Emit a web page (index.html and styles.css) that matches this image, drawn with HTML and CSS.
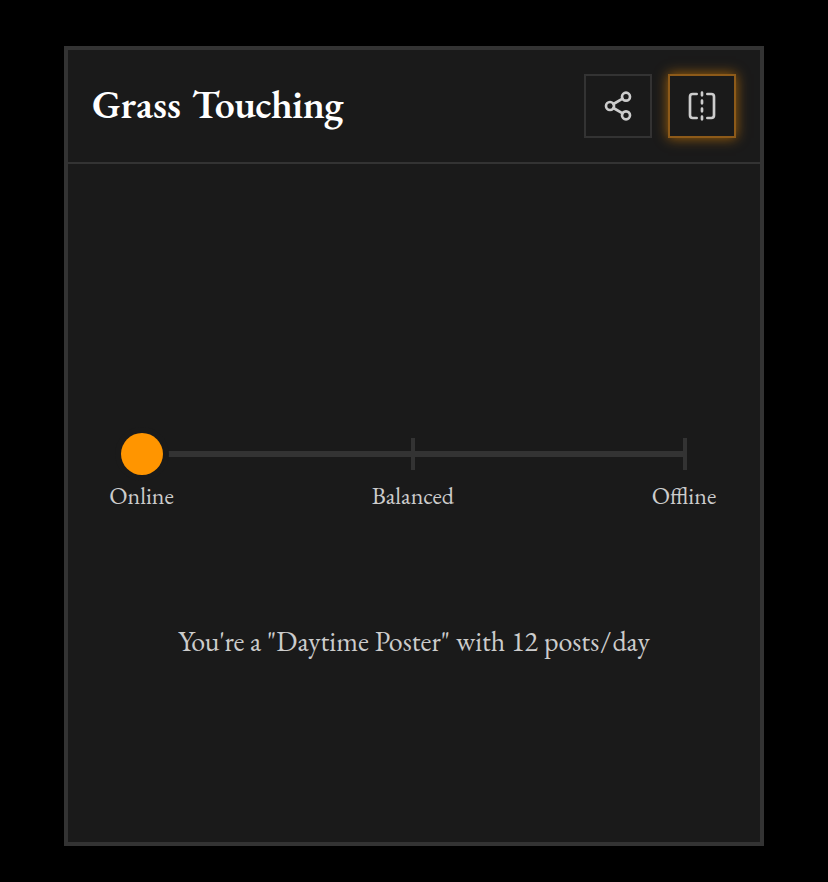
FILE: index.html
```
<!DOCTYPE html>
<html lang="en">
  <head>
    <meta charset="UTF-8" />
    <meta name="viewport" content="width=device-width, initial-scale=1.0" />
    <title>Grass Touching</title>
    <link rel="stylesheet" href="styles.css">
  </head>
  <body>
    <div class="card">
      <div class="card-header">
        <h1>Grass <span class="title-end">Touching</span></h1>
        <div class="actions">
          <button type="button" class="icon-button" aria-label="Share">
            <svg viewBox="0 0 24 24">
              <circle cx="18" cy="5" r="3" />
              <circle cx="6" cy="12" r="3" />
              <circle cx="18" cy="19" r="3" />
              <path d="M8.59 13.51l6.83 3.98M15.41 6.51l-6.82 3.98" />
            </svg>
          </button>
          <button type="button" class="icon-button active" aria-label="Flip">
            <svg viewBox="0 0 24 24">
              <path d="M8 3H5a2 2 0 0 0-2 2v14a2 2 0 0 0 2 2h3" />
              <path d="M16 3h3a2 2 0 0 1 2 2v14a2 2 0 0 1-2 2h-3" />
              <path d="M12 20v2M12 14v2M12 8v2M12 2v2" />
            </svg>
          </button>
        </div>
      </div>

      <div class="card-body">
        <div class="scale">
          <div class="stop">
            <div class="marker"><div class="dot"></div></div>
            <span class="label">Online</span>
          </div>
          <div class="stop">
            <div class="marker"><div class="tick"></div></div>
            <span class="label">Balanced</span>
          </div>
          <div class="stop">
            <div class="marker"><div class="tick"></div></div>
            <span class="label">Offline</span>
          </div>
        </div>
        <p class="summary"><span class="lead">You're</span> a "Daytime Poster" with 12 posts<span class="slash">/</span>day</p>
      </div>
    </div>
  </body>
</html>
```
FILE: styles.css
```
* {
  box-sizing: border-box;
}
body {
  margin: 0;
  padding: 46px 64px 36px;
  background-color: #000;
  color: #ccc;
  font-family: "EB Garamond", "Liberation Serif", serif;
}
.card {
  display: flex;
  flex-direction: column;
  height: 800px;
  background-color: #1a1a1a;
  border: 4px solid #333;
}
.card-header {
  display: flex;
  justify-content: space-between;
  align-items: center;
  height: 114px;
  padding: 24px;
  border-bottom: 2px solid #333;
}
h1 {
  margin: 0 0 4px;
  color: #fff;
  font-size: 40px;
  font-weight: 600;
  line-height: 52px;
  white-space: nowrap;
}
.title-end {
  display: inline-block;
  margin-left: 2px;
  letter-spacing: -0.6px;
}
.actions {
  display: flex;
  gap: 16px;
}
.icon-button {
  display: flex;
  align-items: center;
  justify-content: center;
  width: 68px;
  height: 64px;
  padding: 0;
  background-color: #1a1a1a;
  border: 2px solid #333;
  color: #ccc;
  cursor: pointer;
}
.icon-button.active {
  border-color: #8d5a19;
  box-shadow: 0 0 12px rgba(255, 149, 0, 0.6);
}
.icon-button svg {
  width: 32px;
  height: 32px;
  fill: none;
  stroke: currentColor;
  stroke-width: 2;
  stroke-linecap: round;
  stroke-linejoin: round;
}
.card-body {
  flex: 1;
  padding-top: 269px;
}
.scale {
  position: relative;
  display: flex;
  justify-content: space-between;
  margin: 0 43.5px 0 42px;
}
/* line behind the stops */
.scale::before {
  content: "";
  position: absolute;
  top: 18px;
  left: 32px;
  right: 32px;
  height: 6px;
  background-color: #333;
}
.stop {
  position: relative;
  display: flex;
  flex-direction: column;
  align-items: center;
  width: 64px;
}
.marker {
  display: flex;
  align-items: center;
  height: 42px;
}
.dot {
  width: 42px;
  height: 42px;
  border-radius: 50%;
  background-color: #ff9500;
  box-shadow: 0 0 0 6px #1a1a1a;
}
.tick {
  width: 4px;
  height: 32px;
  background-color: #333;
}
.label {
  margin-top: 5px;
  margin-left: -1px;
  font-size: 24px;
  line-height: 32px;
  white-space: nowrap;
}
.summary {
  margin: 111px 0 0;
  font-size: 28px;
  line-height: 36px;
  text-align: center;
  white-space: nowrap;
  word-spacing: 0.3px;
}
.lead {
  letter-spacing: -0.35px;
}
.slash {
  display: inline-block;
  margin: 0 1px;
}
```
